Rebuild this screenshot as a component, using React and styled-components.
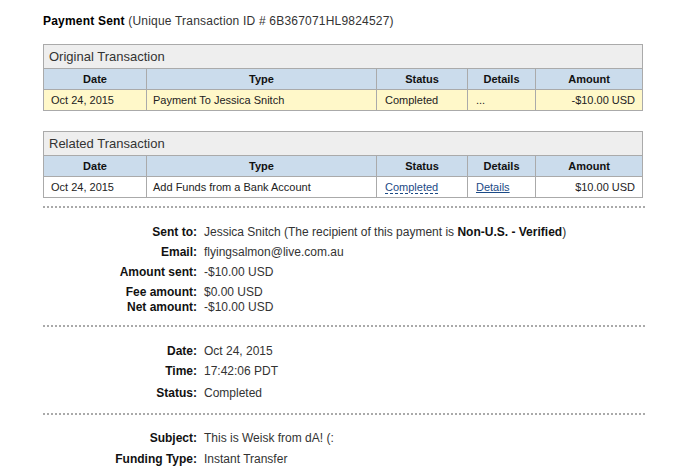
import React from 'react';
import styled, { createGlobalStyle } from 'styled-components';

const GlobalStyle = createGlobalStyle`
	body {
		margin: 0;
		background: #fff;
		font-family: "Liberation Sans", Arial, sans-serif;
		color: #222;
	}
`;

const Page = styled.div`
	width: 602px;
	padding: 14px 0 0 43px;
`;

const Heading = styled.h1`
	margin: 0 0 15px;
	font-size: 12px;
	line-height: 15px;
	font-weight: normal;
	letter-spacing: 0.2px;
	color: #333;

	strong {
		color: #000;
	}
`;

const TxTable = styled.table`
	width: 599px;
	table-layout: fixed;
	border-collapse: separate;
	border-spacing: 0;
	border: 1px solid #aaa;
	border-right: 0;
	border-bottom: 0;
	font-size: 11px;
	margin-bottom: ${(p) => p.$gap || 0}px;
`;

const Caption = styled.th`
	background: #eee;
	color: #333;
	font-size: 13px;
	font-weight: normal;
	line-height: 23px;
	text-align: left;
	padding: 0 5px;
	border-right: 1px solid #aaa;
	border-bottom: 1px solid #aaa;
`;

const HeadCell = styled.th`
	background: #cbdcec;
	color: #111;
	font-weight: bold;
	line-height: 20px;
	padding: 0 6px;
	text-align: center;
	border-right: 1px solid #aaa;
	border-bottom: 1px solid #aaa;
`;

const Cell = styled.td`
	background: ${(p) => (p.$highlight ? '#fff8c9' : '#fff')};
	color: #222;
	line-height: 20px;
	padding: 0 7px 0 ${(p) => p.$indent || 7}px;
	text-align: ${(p) => (p.$right ? 'right' : 'left')};
	white-space: nowrap;
	border-right: 1px solid #aaa;
	border-bottom: 1px solid #aaa;
`;

const StatusLink = styled.span`
	color: #1b4a86;
	text-decoration: underline dashed #1b4a86;
	text-underline-offset: 2px;
`;

const DetailLink = styled.a`
	color: #1b4a86;
	text-decoration: underline;
	text-underline-offset: 1px;
`;

const Dotted = styled.div`
	width: 602px;
	height: 2px;
	background-image: linear-gradient(to right, #aaa 50%, transparent 50%);
	background-size: 4px 2px;
	margin: ${(p) => p.$before || 0}px 0 ${(p) => p.$after || 0}px;
`;

const DetailRow = styled.div`
	display: flex;
	gap: 7px;
	font-size: 12px;
	line-height: 15px;
	margin-top: ${(p) => p.$gap || 0}px;
`;

const Label = styled.span`
	width: 154px;
	flex-shrink: 0;
	text-align: right;
	font-weight: bold;
	color: #111;
`;

const Value = styled.span`
	color: #333;

	b {
		color: #111;
	}
`;

const cols = [103, 230, 91, 68, 107];

function Transaction({ title, row, highlight, gap }) {
	return (
		<TxTable $gap={gap}>
			<colgroup>
				{cols.map((w, i) => (
					<col key={i} style={{ width: w }} />
				))}
			</colgroup>
			<thead>
				<tr>
					<Caption colSpan={5}>{title}</Caption>
				</tr>
				<tr>
					<HeadCell>Date</HeadCell>
					<HeadCell>Type</HeadCell>
					<HeadCell>Status</HeadCell>
					<HeadCell>Details</HeadCell>
					<HeadCell>Amount</HeadCell>
				</tr>
			</thead>
			<tbody>
				<tr>
					<Cell $highlight={highlight}>{row.date}</Cell>
					<Cell $highlight={highlight} $indent={6}>{row.type}</Cell>
					<Cell $highlight={highlight} $indent={8}>{row.status}</Cell>
					<Cell $highlight={highlight} $indent={8}>{row.details}</Cell>
					<Cell $highlight={highlight} $right>{row.amount}</Cell>
				</tr>
			</tbody>
		</TxTable>
	);
}

export default function App() {
	return (
		<Page>
			<GlobalStyle />
			<Heading>
				<strong>Payment Sent</strong> (Unique Transaction ID # 6B367071HL9824527)
			</Heading>

			<Transaction
				title="Original Transaction"
				highlight
				gap={20}
				row={{
					date: 'Oct 24, 2015',
					type: 'Payment To Jessica Snitch',
					status: 'Completed',
					details: '...',
					amount: '-$10.00 USD'
				}}
			/>

			<Transaction
				title="Related Transaction"
				row={{
					date: 'Oct 24, 2015',
					type: 'Add Funds from a Bank Account',
					status: <StatusLink>Completed</StatusLink>,
					details: <DetailLink href="#">Details</DetailLink>,
					amount: '$10.00 USD'
				}}
			/>

			<Dotted $before={8} $after={17} />
			<DetailRow>
				<Label>Sent to:</Label>
				<Value>
					Jessica Snitch (The recipient of this payment is <b>Non-U.S. - Verified</b>)
				</Value>
			</DetailRow>
			<DetailRow $gap={5}>
				<Label>Email:</Label>
				<Value>flyingsalmon@live.com.au</Value>
			</DetailRow>
			<DetailRow $gap={5}>
				<Label>Amount sent:</Label>
				<Value>-$10.00 USD</Value>
			</DetailRow>
			<DetailRow $gap={5}>
				<Label>Fee amount:</Label>
				<Value>$0.00 USD</Value>
			</DetailRow>
			<DetailRow>
				<Label>Net amount:</Label>
				<Value>-$10.00 USD</Value>
			</DetailRow>

			<Dotted $before={10} $after={17} />
			<DetailRow>
				<Label>Date:</Label>
				<Value>Oct 24, 2015</Value>
			</DetailRow>
			<DetailRow $gap={5}>
				<Label>Time:</Label>
				<Value>17:42:06 PDT</Value>
			</DetailRow>
			<DetailRow $gap={7}>
				<Label>Status:</Label>
				<Value>Completed</Value>
			</DetailRow>

			<Dotted $before={12} $after={16} />
			<DetailRow>
				<Label>Subject:</Label>
				<Value>This is Weisk from dA! (:</Value>
			</DetailRow>
			<DetailRow $gap={6}>
				<Label>Funding Type:</Label>
				<Value>Instant Transfer</Value>
			</DetailRow>
		</Page>
	);
}
